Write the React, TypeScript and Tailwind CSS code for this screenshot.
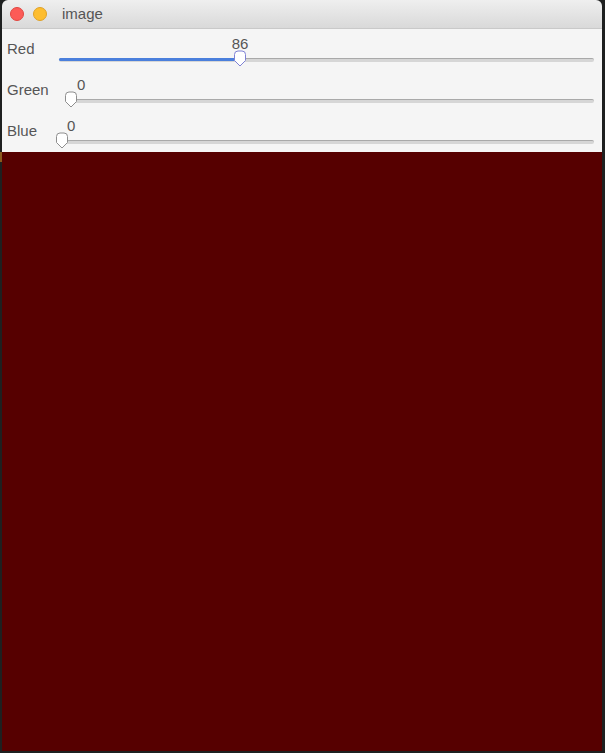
import React from 'react';

type Channel = { name: string; value: number; labelW: number; textOffset: number; active?: boolean };

const channels: Channel[] = [
  { name: 'Red', value: 86, labelW: 57, textOffset: -8, active: true },
  { name: 'Green', value: 0, labelW: 64, textOffset: 6 },
  { name: 'Blue', value: 0, labelW: 55, textOffset: 5 },
];

const Thumb: React.FC<{ active?: boolean }> = ({ active }) => (
  <svg width="14" height="17" viewBox="0 0 14 17">
    <path
      d="M1.5 4.5 Q1.5 1 5 1 H9 Q12.5 1 12.5 4.5 V10.5 L7 16 L1.5 10.5 Z"
      fill="#ffffff"
      stroke={active ? '#7f82d4' : '#8e8e8e'}
      strokeWidth="1"
    />
  </svg>
);

const SliderRow: React.FC<{ ch: Channel }> = ({ ch }) => {
  const trackW = 600 - ch.labelW - 8;
  const center = 5 + (ch.value / 255) * (trackW - 14);
  return (
    <div className="flex h-[41px]">
      <div className="pl-[5px] pt-[11px] text-[15px] leading-[18px] text-[#555]" style={{ width: ch.labelW }}>
        {ch.name}
      </div>
      <div className="relative flex-1 mr-[8px]">
        <div className="absolute left-0 right-0 top-[29px] h-[4px] rounded-full bg-[#d6d6d6] border-t border-[#a9a9a9]" />
        {ch.value > 0 && (
          <div className="absolute left-0 top-[29px] h-[3px] rounded-full bg-[#4a7fdc]" style={{ width: center }} />
        )}
        <div className="absolute top-[21px]" style={{ left: center - 7 }}>
          <Thumb active={ch.active} />
        </div>
        <div className="absolute top-[6px] text-[15px] leading-[18px] text-[#555]" style={{ left: center + ch.textOffset }}>
          {ch.value}
        </div>
      </div>
    </div>
  );
};

export default function App() {
  return (
    <div className="w-[605px] h-[753px] bg-[#1e2020] flex overflow-hidden" style={{ fontFamily: '"Liberation Sans", Arial, sans-serif' }}>
      {/* left edge */}
      <div className="w-[2px] flex flex-col">
        <div className="h-[152px]" />
        <div className="h-[10px] bg-[#8a5a20]" />
      </div>

      {/* window */}
      <div className="w-[600px] h-[751px] flex flex-col rounded-t-[6px] overflow-hidden">
        {/* title bar */}
        <div className="h-[29px] flex items-center bg-gradient-to-b from-[#efefef] to-[#d9d9d9] border-b border-[#c9c9c9]">
          <div className="ml-[8px] w-[14px] h-[14px] rounded-full bg-[#fc5b57] border border-[#e2463f]" />
          <div className="ml-[9px] w-[14px] h-[14px] rounded-full bg-[#fdbd2f] border border-[#dfa127]" />
          <span className="ml-[15px] text-[15px] text-[#555]">image</span>
        </div>

        {/* controls */}
        <div className="bg-[#f5f5f5]">
          {channels.map((ch) => (
            <SliderRow key={ch.name} ch={ch} />
          ))}
        </div>

        {/* image */}
        <div className="flex-1 bg-[#560000]" />
      </div>
    </div>
  );
}
